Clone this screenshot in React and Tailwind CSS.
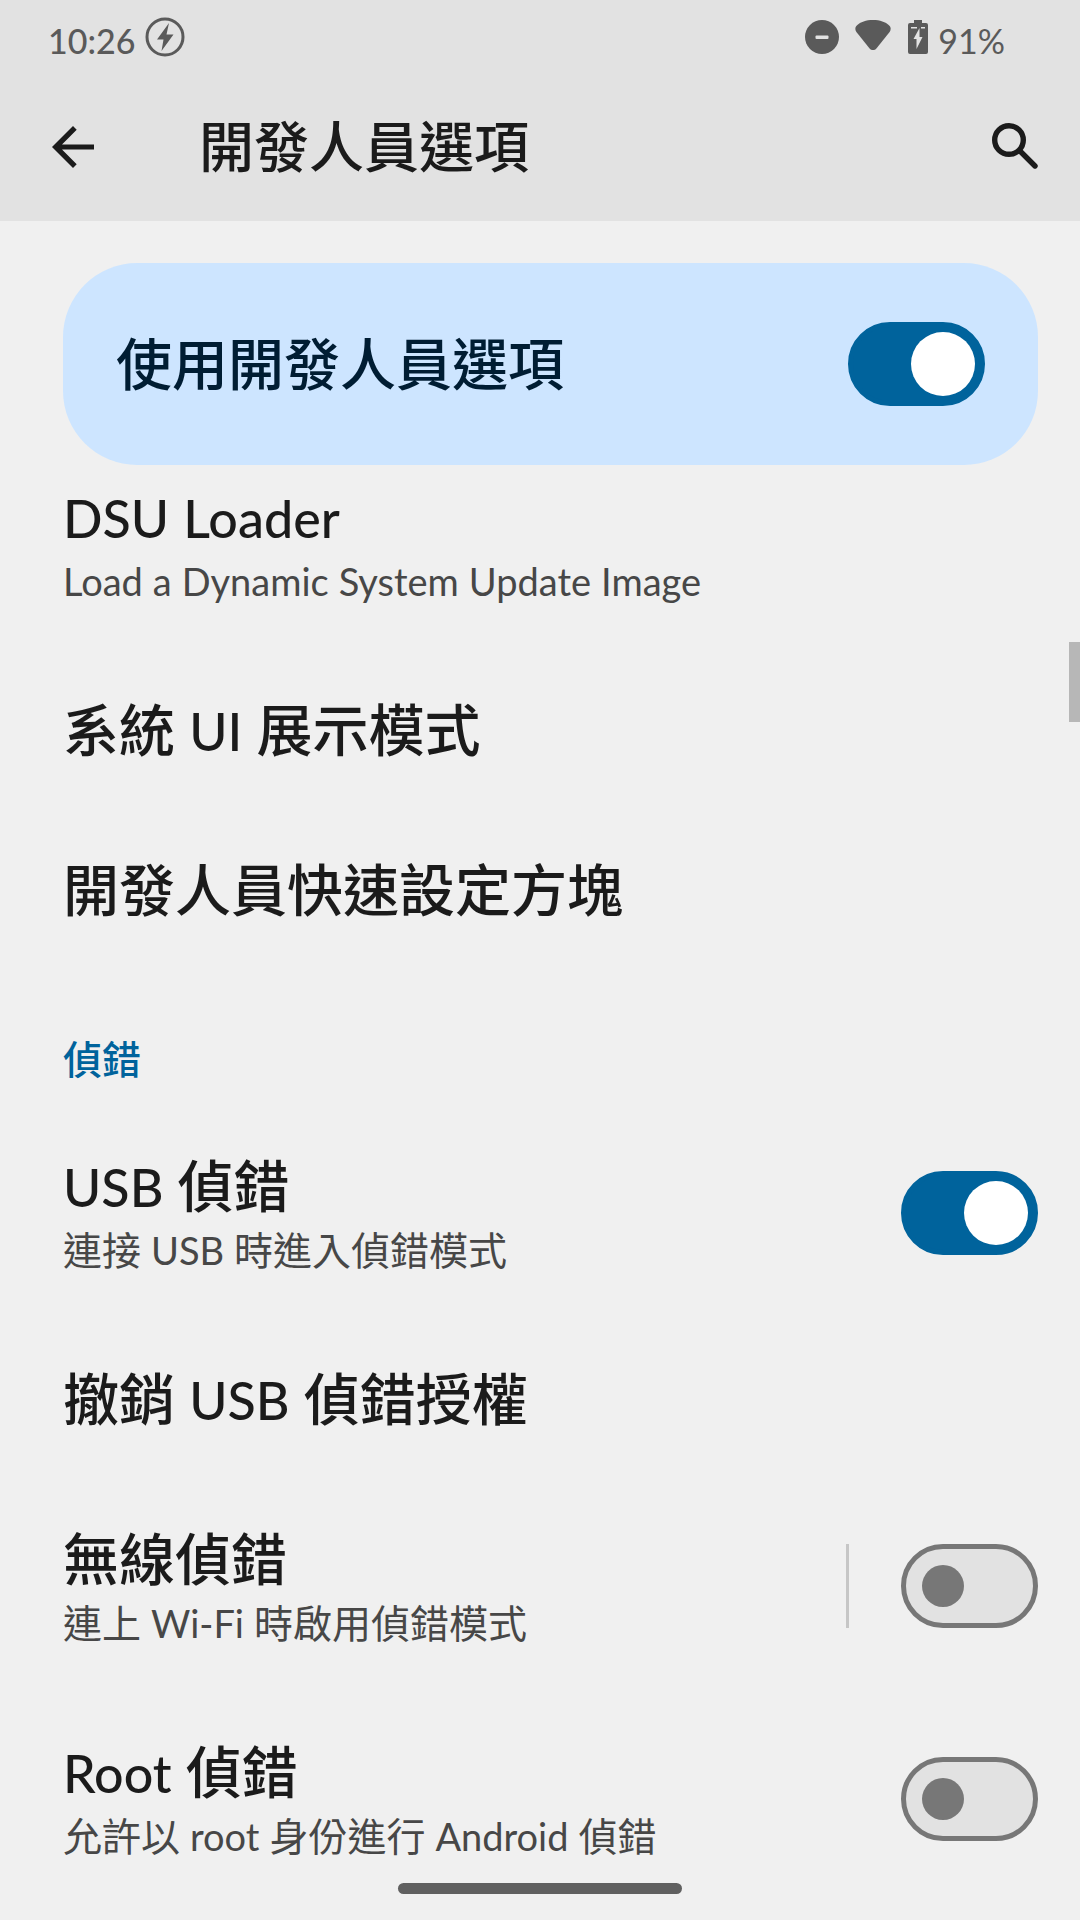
import { useState } from "react";

function BoltCircleIcon() {
  return (
    <svg width="40" height="40" viewBox="0 0 40 40" aria-hidden="true">
      <circle cx="20" cy="20" r="18" fill="none" stroke="currentColor" strokeWidth="3" />
      <path d="M24 6 L12 22.5 H18.5 L16.5 34 L28.5 17.5 H21.5 Z" fill="currentColor" />
    </svg>
  );
}

function DndIcon() {
  return (
    <svg width="34" height="34" viewBox="0 0 34 34" aria-hidden="true">
      <circle cx="17" cy="17" r="17" fill="currentColor" />
      <rect x="10.5" y="15.5" width="13" height="3.6" rx="1" fill="#e2e2e2" />
    </svg>
  );
}

function WifiIcon() {
  return (
    <svg width="36" height="34" viewBox="0 0 36 34" aria-hidden="true">
      <path
        d="M18 0 C11 0 5.5 2 1.8 5.4 C-0.2 7.3 0 10 1.4 12 L14.6 28.4 C16.4 30.6 19.6 30.6 21.4 28.4 L34.6 12 C36 10 36.2 7.3 34.2 5.4 C30.5 2 25 0 18 0 Z"
        fill="currentColor"
      />
    </svg>
  );
}

function BatteryIcon() {
  return (
    <svg width="20" height="34" viewBox="0 0 20 34" aria-hidden="true">
      <path
        d="M6 0 H14 V3 H18 Q20 3 20 5 V32 Q20 34 18 34 H2 Q0 34 0 32 V5 Q0 3 2 3 H6 Z"
        fill="currentColor"
      />
      <path d="M3 7 H9 V8.4 H3 Z M13 7 H17 V8.4 H13 Z M11.5 8 L5.5 19 H8.5 V29 L14.5 17 H11.5 Z" fill="#e2e2e2" />
    </svg>
  );
}

function BackIcon() {
  return (
    <svg width="42" height="42" viewBox="0 0 42 42" aria-hidden="true">
      <path d="M42 18.4 V23.6 H10 L24.7 38.3 L21 42 L0 21 L21 0 L24.7 3.7 L10 18.4 Z" fill="currentColor" />
    </svg>
  );
}

function SearchIcon() {
  return (
    <svg width="46" height="46" viewBox="0 0 46 46" aria-hidden="true">
      <circle cx="17" cy="17" r="14.3" fill="none" stroke="currentColor" strokeWidth="5.4" />
      <path d="M28 28 L43 43" stroke="currentColor" strokeWidth="5.4" strokeLinecap="round" />
    </svg>
  );
}

function Switch({ id, defaultOn }) {
  const [on, setOn] = useState(defaultOn);
  return (
    <label htmlFor={id} className="relative h-[84px] w-[137px] shrink-0 cursor-pointer">
      <input
        id={id}
        type="checkbox"
        role="switch"
        aria-labelledby={`${id}-title`}
        checked={on}
        onChange={(e) => setOn(e.target.checked)}
        className="peer size-full appearance-none rounded-full border-[5px] border-[#777777] bg-[#e2e2e2] checked:border-[#00639c] checked:bg-[#00639c]"
      />
      <span className="pointer-events-none absolute top-[21px] left-[21px] size-[42px] rounded-full bg-[#777777] peer-checked:top-[10px] peer-checked:left-[63px] peer-checked:size-16 peer-checked:bg-white" />
    </label>
  );
}

// Latin runs are set a little smaller than the Chinese text around them.
function MixedText({ text, latinClass }) {
  return text.split(/([A-Za-z-]+)/).map((part, i) =>
    i % 2 === 1 ? (
      <span key={i} className={latinClass}>
        {part}
      </span>
    ) : (
      part
    )
  );
}

function Row({ id, title, summary, toggle, divider, first }) {
  return (
    <li className={`flex items-center pr-[42px] pl-[63px] pb-[42px] ${first ? "pt-[14px]" : "pt-[42px]"}`}>
      <div className="min-w-0 flex-1">
        <h3 id={`${id}-title`} className="text-[56px] leading-[76px] font-medium text-[#1b1b1b]">
          <MixedText text={title} latinClass="text-[52px] leading-none" />
        </h3>
        {summary && (
          <p className="text-[39px] leading-[53px] text-[#474747]">
            <MixedText text={summary} latinClass="text-[38px] leading-none" />
          </p>
        )}
      </div>
      {divider && <span className="mr-[52px] h-[84px] w-[3px] bg-[#c6c6c6]" />}
      {toggle && <Switch id={id} defaultOn={toggle === "on"} />}
    </li>
  );
}

const generalRows = [
  { id: "dsu", title: "DSU Loader", summary: "Load a Dynamic System Update Image", first: true },
  { id: "demo", title: "系統 UI 展示模式" },
  { id: "tiles", title: "開發人員快速設定方塊" },
];

const debugRows = [
  { id: "usb", title: "USB 偵錯", summary: "連接 USB 時進入偵錯模式", toggle: "on" },
  { id: "revoke", title: "撤銷 USB 偵錯授權" },
  { id: "wireless", title: "無線偵錯", summary: "連上 Wi-Fi 時啟用偵錯模式", toggle: "off", divider: true },
  { id: "root", title: "Root 偵錯", summary: "允許以 root 身份進行 Android 偵錯", toggle: "off" },
];

export default function App() {
  return (
    <div
      lang="zh-Hant"
      className="relative min-h-screen overflow-hidden bg-[#f0f0f0] font-['Lato','Noto_Sans_CJK_TC',sans-serif] text-[#1b1b1b]"
    >
      <header className="bg-[#e2e2e2]">
        <div className="flex h-[74px] items-center justify-between pr-[75px] pl-12 text-[34px] text-[#5a5a5a]">
          <div className="flex items-center gap-[10px]">
            <time className="pt-2 leading-[40px] font-medium">10:26</time>
            <BoltCircleIcon />
          </div>
          <div className="flex items-center">
            <DndIcon />
            <span className="w-4" />
            <WifiIcon />
            <span className="w-[17px]" />
            <BatteryIcon />
            <span className="pt-2 pl-[10px] leading-[40px]">91%</span>
          </div>
        </div>
        <div className="flex h-[147px] items-start justify-between pr-[42px] pl-[52px]">
          <div className="flex h-[146px] items-center">
            <button type="button" aria-label="返回">
              <BackIcon />
            </button>
            <h1 className="pb-[2px] pl-[105px] text-[55px] leading-[76px] font-medium">開發人員選項</h1>
          </div>
          <button type="button" aria-label="搜尋" className="flex h-[144px] items-center">
            <SearchIcon />
          </button>
        </div>
      </header>

      <main>
        <section className="mt-[42px] mr-[42px] ml-[63px] flex h-[202px] items-center justify-between rounded-[74px] bg-[#cde5ff] pr-[53px] pl-[53px] text-[#001d33]">
          <h2 id="master-title" className="text-[56px] leading-[76px] font-medium">
            使用開發人員選項
          </h2>
          <Switch id="master" defaultOn />
        </section>
        <ul>
          {generalRows.map((row) => (
            <Row key={row.id} {...row} />
          ))}
        </ul>
        <section>
          <h2 className="pt-[63px] pb-5 pl-[63px] text-[39px] leading-[53px] font-medium text-[#00639c]">偵錯</h2>
          <ul>
            {debugRows.map((row) => (
              <Row key={row.id} {...row} />
            ))}
          </ul>
        </section>
      </main>

      <div className="absolute top-[642px] right-0 h-20 w-[11px] bg-[#b7b7b7]" />
      <div className="absolute inset-x-0 bottom-[26px] mx-auto h-[11px] w-[284px] rounded-full bg-[#606060]" />
    </div>
  );
}
